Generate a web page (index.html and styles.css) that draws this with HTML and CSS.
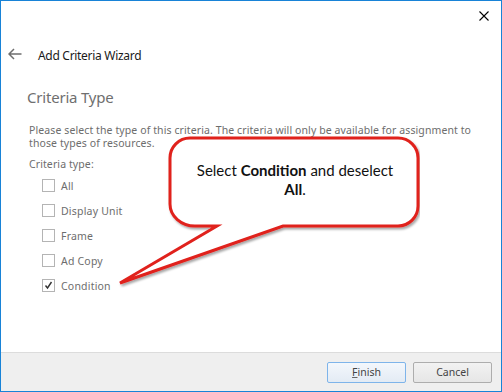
FILE: index.html
```html
<!DOCTYPE html>
<html>
<head>
    <title>Add Criteria Wizard</title>
    <link rel="stylesheet" href="styles.css">
</head>
<body>
    <div class="window">
        <div class="titlebar">
            <span class="close-btn">
                <svg width="10" height="10" viewBox="0 0 10 10"><path d="M0.5 0.5 L9.5 9.5 M9.5 0.5 L0.5 9.5" stroke="#000" stroke-width="1.1" fill="none"/></svg>
            </span>
        </div>

        <div class="header">
            <svg class="back-arrow" width="14" height="12" viewBox="0 0 14 12"><path d="M13.5 6 H1 M6 1 L1 6 L6 11" stroke="#6e6e6e" stroke-width="1.5" fill="none"/></svg>
            <span class="wizard-title">Add Criteria Wizard</span>
        </div>

        <div class="content">
            <h2>Criteria Type</h2>
            <p class="intro">Please select the type of this criteria. The criteria will only be available for assignment to those types of resources.</p>
            <div class="field-label">Criteria type:</div>
            <ul class="options">
                <li><span class="checkbox"></span>All</li>
                <li><span class="checkbox"></span>Display Unit</li>
                <li><span class="checkbox"></span>Frame</li>
                <li><span class="checkbox"></span>Ad Copy</li>
                <li>
                    <span class="checkbox">
                        <svg width="11" height="11" viewBox="0 0 11 11"><path d="M2.5 5.5 L4.5 8 L8.5 2" stroke="#333" stroke-width="1.4" fill="none"/></svg>
                    </span>Condition
                </li>
            </ul>
        </div>

        <div class="footer">
            <button class="btn btn-default"><u>F</u>inish</button>
            <button class="btn">Cancel</button>
        </div>

        <div class="callout">
            <svg class="callout-shape" width="310" height="160" viewBox="0 0 310 160">
                <defs>
                    <filter id="shadow" x="-10%" y="-10%" width="120%" height="130%">
                        <feDropShadow dx="1.5" dy="2" stdDeviation="1.2" flood-color="#000" flood-opacity="0.35"/>
                    </filter>
                </defs>
                <!-- rect 170..418 x 138..226 in window coords, offset by (110,128) -->
                <path d="M82 10 H288 A20 20 0 0 1 308 30 V78 A20 20 0 0 1 288 98 H173 L10 155 L107 98 H85 A25 22 0 0 1 60 76 V30 A20 20 0 0 1 80 10 Z"
                      fill="#fff" stroke="#e0201c" stroke-width="3" stroke-linejoin="miter" filter="url(#shadow)"/>
            </svg>
            <div class="callout-text">Select <b>Condition</b> and deselect <b>All</b>.</div>
        </div>
    </div>
</body>
</html>
```

FILE: styles.css
```css
body {
    margin: 0;
    font-family: "Noto Sans", Arial, sans-serif;
    background-color: #fff;
}
.window {
    position: relative;
    box-sizing: border-box;
    width: 502px;
    height: 392px;
    border: 1px solid #1883d7;
    background-color: #fff;
    display: flex;
    flex-direction: column;
}
.titlebar {
    height: 29px;
    display: flex;
    justify-content: flex-end;
    align-items: center;
}
.close-btn {
    display: flex;
    width: 46px;
    height: 29px;
    align-items: center;
    justify-content: center;
    margin-right: -6px;
}
.header {
    display: flex;
    align-items: center;
    height: 20px;
    margin-top: 15px;
    padding-left: 7px;
}
.back-arrow {
    margin-top: -3px;
}
.wizard-title {
    margin-left: 16px;
    font-size: 12px;
    color: #1a1a1a;
    letter-spacing: -0.3px;
}
.content {
    flex: 1;
    padding: 0 22px 0 26px;
}
h2 {
    margin: 22px 0 0 0;
    font-size: 15px;
    font-weight: normal;
    line-height: 20px;
    color: #6f6f6f;
    letter-spacing: -0.2px;
}
.intro {
    margin: 17px 0 0 2px;
    font-size: 10.5px;
    line-height: 13px;
    color: #6d6d6d;
    letter-spacing: 0.1px;
}
.field-label {
    margin: 6px 0 0 2px;
    font-size: 10.5px;
    line-height: 16px;
    color: #6d6d6d;
    letter-spacing: 0.1px;
}
.options {
    list-style: none;
    margin: 1px 0 0 15px;
    padding: 0;
}
.options li {
    display: flex;
    align-items: center;
    height: 25px;
    font-size: 10.5px;
    color: #6d6d6d;
    letter-spacing: 0.2px;
}
.checkbox {
    box-sizing: border-box;
    width: 13px;
    height: 13px;
    border: 1px solid #b4b4b4;
    background-color: #fff;
    margin-right: 6px;
    display: flex;
    align-items: center;
    justify-content: center;
}
.footer {
    height: 38px;
    border-top: 1px solid #dcdcdc;
    background-color: #efefef;
    display: flex;
    justify-content: flex-end;
    align-items: center;
    gap: 7px;
    padding-right: 9px;
}
.btn {
    box-sizing: border-box;
    width: 79px;
    height: 21px;
    font-family: "Noto Sans", Arial, sans-serif;
    font-size: 10.5px;
    color: #444;
    border: 1px solid #adadad;
    border-radius: 2px;
    background: linear-gradient(#f2f2f2, #e6e6e6);
    padding: 0;
}
.btn-default {
    border-color: #7eb4ea;
    background: linear-gradient(#f3f7fc, #e3ebf4);
}
.btn u {
    text-decoration-color: #666;
}
.callout {
    position: absolute;
    left: 109px;
    top: 127px;
    width: 310px;
    height: 160px;
}
.callout-shape {
    position: absolute;
    left: 0;
    top: 0;
}
.callout-text {
    position: absolute;
    left: 77px;
    top: 33px;
    width: 216px;
    text-align: center;
    font-family: Lato, "Noto Sans", sans-serif;
    font-size: 15px;
    line-height: 19px;
    color: #111;
}
```
